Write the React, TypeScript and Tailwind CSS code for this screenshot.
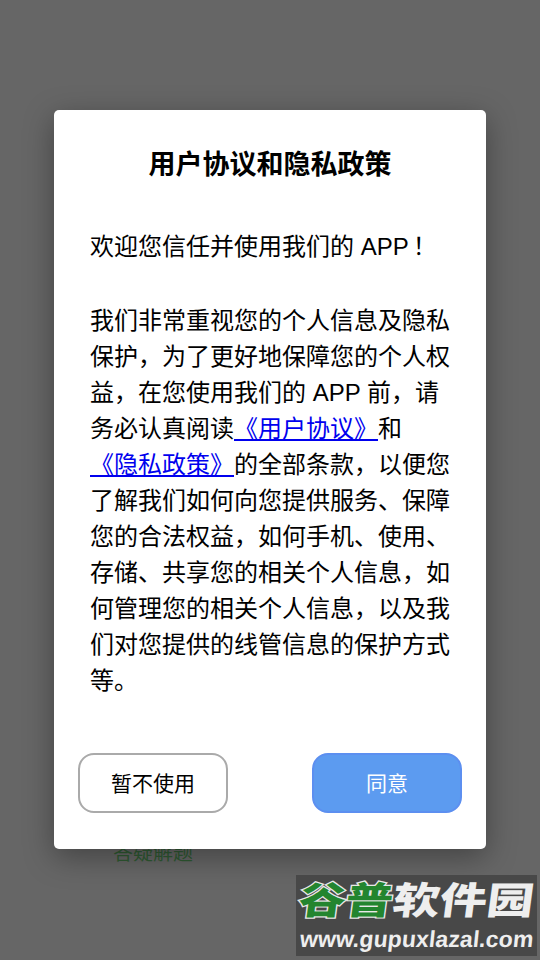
import React from 'react';

const cjk = "font-['Liberation_Sans','Noto_Sans_CJK_SC',sans-serif]";

export default function App() {
  return (
    <div className={`relative h-[960px] w-[540px] overflow-hidden bg-[#666666] ${cjk}`}>
      {/* page behind the overlay */}
      <div className="absolute left-[113px] top-[841px] text-[20px] leading-[24px] text-[#2f5a33]">答疑解题</div>

      <div className="relative flex h-full items-start justify-center pt-[110px]">
        <div className="flex h-[739px] w-[432px] flex-col rounded-[5px] bg-white shadow-[0_8px_30px_rgba(0,0,0,0.35)]">
          <h1 className="mt-[38px] text-center text-[27px] font-bold leading-[34px] text-black">用户协议和隐私政策</h1>

          <div className="mt-[47px] px-[36px] text-[24px] leading-[36px] text-black">
            <p>欢迎您信任并使用我们的 APP<span className="ml-[4px]">！</span></p>
            <p className="mt-[38px]">
              我们非常重视您的个人信息及隐私保护，为了更好地保障您的个人权益，在您使用我们的 APP 前，请务必认真阅读
              <a className="text-[#0000ee] underline">《用户协议》</a>和
              <a className="whitespace-nowrap text-[#0000ee] underline">《隐私政策》</a>
              的全部条款，以便您了解我们如何向您提供服务、保障您的合法权益，如何手机、使用、存储、共享您的相关个人信息，如何管理您的相关个人信息，以及我们对您提供的线管信息的保护方式等。
            </p>
          </div>

          <div className="mt-auto mb-[36px] flex justify-between px-[24px]">
            <button className="h-[60px] w-[150px] rounded-[16px] border-2 border-[#aaaaaa] bg-white pt-[2px] text-[21px] text-black">暂不使用</button>
            <button className="h-[60px] w-[150px] rounded-[16px] border-2 border-[#5c8ff0] bg-[#5c9bf0] pt-[2px] text-[21px] text-white">同意</button>
          </div>
        </div>
      </div>

      {/* watermark */}
      <div className="absolute left-[296px] top-[875px] flex h-[81px] w-[241px] flex-col items-center overflow-hidden bg-[#484848]">
        <div className="flex h-[51px] -skew-x-6 scale-y-[0.8] items-center text-[47px] font-black leading-[51px] [paint-order:stroke_fill] [-webkit-text-stroke:3px_#e8e8e8]">
          <span className="text-[#23852f]">谷普</span>
          <span className="text-[#eeeeee] [-webkit-text-stroke:0]">软件园</span>
        </div>
        <div className="-skew-x-6 text-[23px] font-bold leading-[26px] tracking-[0.1px] text-[#eeeeee]">www.gupuxlazal.com</div>
      </div>
    </div>
  );
}
